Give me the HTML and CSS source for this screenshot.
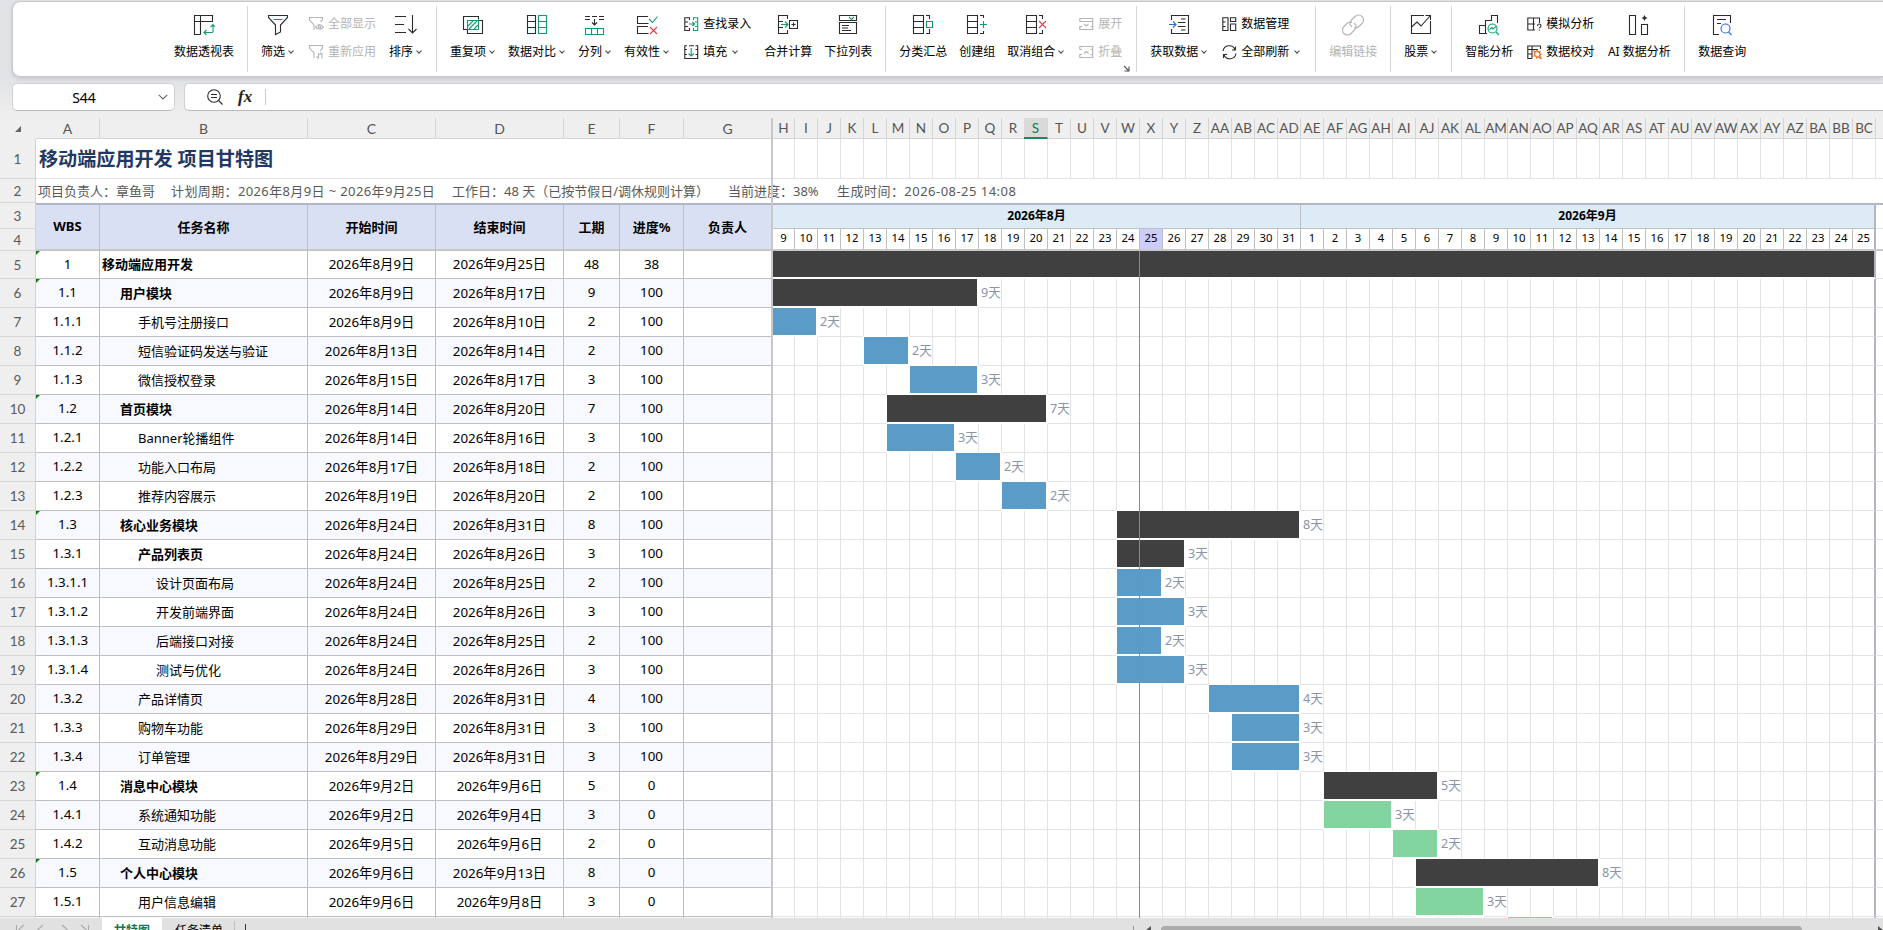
FILE: index.html
```html
<!DOCTYPE html>
<html lang="zh-CN">
<head>
<meta charset="utf-8">
<title>项目甘特图</title>
<link rel="stylesheet" href="styles.css">
</head>
<body>
<div class="app">
  <div class="ribbon">
    <div class="tool"><svg class="ico" viewBox="0 0 22 22"><path d="M7.5 20.500H1.500V1.500H19.500V7.500H1.500M7.500 1.500V20.500"/><path class="g" d="M20 18V10.500M17.500 13L20 10.500L22 13M20 18.500H11M13.500 16L11 18.500L13.500 21"/></svg><span>数据透视表</span></div>
    <i class="sep"></i>
    <div class="tool"><svg class="ico" viewBox="0 0 22 22"><path d="M1.500 1.500H20.500V3.500L13.500 11V18L8.500 20.500V11L1.500 3.500Z"/><path class="g" d="M6.500 5.500H15.500"/></svg><span class="dd">筛选</span></div>
    <div class="stack off">
      <div class="mini"><svg class="sm" viewBox="0 0 15 15"><path d="M5 13L5 8L.5 3V.5H13.500V3L11.500 5M6.500 10Q10.500 5 14.500 10Q10.500 14 6.500 10Z"/><circle cx="10.500" cy="9.800" r="1.200"/></svg><span>全部显示</span></div>
      <div class="mini"><svg class="sm" viewBox="0 0 15 15"><path d="M5 13L5 8L.5 3V.5H13.500V3L11 6M9.500 8V13.500M7.500 11.500L9.500 13.500M13 13.500V8.500Q11 7 11 10"/></svg><span>重新应用</span></div>
    </div>
    <div class="tool"><svg class="ico" viewBox="0 0 22 22"><path d="M0 2.500H11M0 10.500H9M0 18.500H11M17.500 1V19M13.500 15L17.500 19L21.500 15"/></svg><span class="dd">排序</span></div>
    <i class="sep"></i>
    <div class="tool"><svg class="ico" viewBox="0 0 22 22"><path d="M5 15.500H1.500V2.500H16.500V5.500M5.500 16V19.500H20.500V6.500H17"/><path class="g" d="M5.500 6.500H16.500V15.500H5.500ZM6 12L11 7M7 15L15 7M12 15L16 11"/></svg><span class="dd">重复项</span></div>
    <div class="tool"><svg class="ico" viewBox="0 0 22 22"><path d="M1.500 1.500H9.500V19.500H1.500ZM1.500 7.500H9.500M1.500 13.500H9.500"/><path class="g" d="M12.500 1.500H20.500V19.500H12.500ZM12.500 7.500H20.500M12.500 13.500H20.500"/></svg><span class="dd">数据对比</span></div>
    <div class="tool"><svg class="ico" viewBox="0 0 22 22"><path d="M1 2.500H6M8 2.500H13M15 2.500H20M1 5.500H6M15 5.500H20M10.500 5V11M8 8.500L10.500 11L13 8.500"/><path class="g" d="M1.500 14.500H19.500V20.500H1.500ZM7.500 14.500V20.500M13.500 14.500V20.500"/></svg><span class="dd">分列</span></div>
    <div class="tool"><svg class="ico" viewBox="0 0 22 22"><path d="M12 2.500H1.500V9.500H12.500M12 12.500H1.500V19.500H12.500"/><path class="g" d="M13 5L16.500 8.500L21.500 2.500"/><path class="r" d="M14 13L21 20M21 13L14 20"/></svg><span class="dd">有效性</span></div>
    <div class="stack">
      <div class="mini"><svg class="sm" viewBox="0 0 15 15"><path d="M5.500 3V.8H.8V13.500H5.500V11M.8 5H4M.8 9.500H4"/><path class="g" d="M9.500 3V.8H13.700V13.500H9.500V11M13 5H11M13 9.500H11M5 7H10.500M8.500 5L10.500 7L8.500 9"/></svg><span>查找录入</span></div>
      <div class="mini"><svg class="sm" viewBox="0 0 15 15"><path d="M3 .8H.8V13.500H13.700V.8H11.500M5 .8H10M.8 4.500H3M11.500 4.500H13.700M.8 9.500H3M11.500 9.500H13.700"/><path class="g" d="M7.200 3V11M4.500 8.500L7.200 11L10 8.500"/></svg><span class="dd wide">填充</span></div>
    </div>
    <div class="tool"><svg class="ico" viewBox="0 0 22 22"><path d="M10.500 5V1.500H1.500V19.500H10.500V16M1.500 7.500H6M1.500 13.500H6M12.500 6.500H20.500V14.500H12.500ZM14.500 10.500H18.500M16.500 8.500V12.500"/><path class="g" d="M4 10.500H11M8 7.500L11 10.500L8 13.500"/></svg><span>合并计算</span></div>
    <div class="tool"><svg class="ico" viewBox="0 0 22 22"><path d="M2.500 1.500H19.500V6.500H2.500ZM2.500 8.500H19.500V19.500H2.500ZM5 11.500H12M5 14H11M5 16.500H14"/><path class="g" d="M12 3L14.500 5.500L17 3"/></svg><span>下拉列表</span></div>
    <i class="sep"></i>
    <div class="tool"><svg class="ico" viewBox="0 0 22 22"><path d="M1.500 1.500H11.500V19.500H1.500ZM1.500 7.500H11.500M1.500 13.500H11.500M14 1.500H17.500V5M17.500 15V19.500H14"/><path class="g" d="M14.500 7.500H20.500V13.500H14.500Z"/></svg><span>分类汇总</span></div>
    <div class="tool"><svg class="ico" viewBox="0 0 22 22"><path d="M1.500 1.500H11.500V19.500H1.500ZM1.500 7.500H11.500M1.500 13.500H11.500M14 1.500H17.500V4M17.500 17V19.500H14"/><path class="g" d="M14 10.500H21M17.500 7V14"/></svg><span>创建组</span></div>
    <div class="tool"><svg class="ico" viewBox="0 0 22 22"><path d="M1.500 1.500H11.500V19.500H1.500ZM1.500 7.500H11.500M1.500 13.500H11.500M14 1.500H17.500V5M17.500 16V19.500H14"/><path class="r" d="M14 7L21 14M21 7L14 14"/></svg><span class="dd">取消组合</span></div>
    <div class="stack off">
      <div class="mini"><svg class="sm" viewBox="0 0 15 15"><path d="M.8 4.500V1.500H13.700V12.500H.8V9M.8 4.500H13.700M5 7L7.200 9L9.500 7M.8 9.500H3M11.500 9.500H13.700"/></svg><span>展开</span></div>
      <div class="mini"><svg class="sm" viewBox="0 0 15 15"><path d="M.8 4.500V1.500H13.700V12.500H.8V9M3 4.500H.8M5 8.500L7.200 6.500L9.500 8.500M13.700 4.500H11.500M.8 9.500H3M11.500 9.500H13.700"/></svg><span>折叠</span></div>
      <svg class="launch" viewBox="0 0 7 7"><path d="M1 1L5.500 5.500M6 1.500V6H1.500"/></svg>
    </div>
    <i class="sep"></i>
    <div class="tool"><svg class="ico" viewBox="0 0 22 22"><path d="M3.500 6V1.500H20.500V19.500H3.500V15M13 5H17.500M10 8.500H17.500M10 12.500H17.500M13 16H17.500"/><path class="b" d="M1 10.500H8M5 7.500L8 10.500L5 13.500"/></svg><span class="dd">获取数据</span></div>
    <div class="stack">
      <div class="mini"><svg class="sm" viewBox="0 0 15 15"><path d="M.8 .8H6V13.500H.8ZM.8 5H3.500M.8 9.500H3.500M8.500 .8H13.700V4.500H8.500ZM8.500 7H13.700V13.500H8.500Z"/></svg><span>数据管理</span></div>
      <div class="mini"><svg class="sm" viewBox="0 0 15 15"><path d="M1 6A6.300 6.300 0 0 1 13 4.500M13.500 1.500V5H10M14 8.500A6.300 6.300 0 0 1 2 10M1.500 13V9.500H5"/></svg><span class="dd wide">全部刷新</span></div>
    </div>
    <i class="sep"></i>
    <div class="tool off"><svg class="ico" viewBox="0 0 22 22"><path d="M10 13C6.500 10.500 8 7.500 10 5.500L13 2.500C15 .5 18 .5 20 2.500S22 7.500 20 9.500L17 12.500C15.500 14 13.500 14 12 13.500M12 9C15.500 11.500 14 14.500 12 16.500L9 19.500C7 21.500 4 21.500 2 19.500S0 14.500 2 12.500L5 9.500C6.500 8 8.500 8 10 8.500"/></svg><span>编辑链接</span></div>
    <i class="sep"></i>
    <div class="tool"><svg class="ico" viewBox="0 0 22 22"><path d="M14 1.500H1.500V19.500H20.500V7M1.500 13L7 8L11 12L20 2M15.500 1.500H20.500V6"/></svg><span class="dd">股票</span></div>
    <i class="sep"></i>
    <div class="tool"><svg class="ico" viewBox="0 0 22 22"><path d="M9 19.500H1.500V11.500H7.500V19.500M7.500 11.500V6.500H13.500V1.500H19.500V9"/><circle class="g" cx="14.500" cy="14.500" r="4.500"/><path class="g" d="M18 18L21 21M11.500 15.500L14 13.500L15 15L18 12.500"/></svg><span>智能分析</span></div>
    <div class="stack">
      <div class="mini"><svg class="sm" viewBox="0 0 15 15"><path d="M8 13H.8V1H12.500V6M.8 7H8M6.500 1V13M10.500 9Q10.500 7 12 7Q14 7 14 8.700Q14 10 12.300 11M12.300 12.500V13.500"/></svg><span>模拟分析</span></div>
      <div class="mini"><svg class="sm" viewBox="0 0 15 15"><path d="M5 13.500H.8V1H13.500V4M.8 4.500H11M5 1V13.500M.8 9H5"/><path class="o" d="M7 6L9 7L10 5.500L11 7L13 6.500L12.500 8.500L14 9.500L12.500 10.500L14.500 14L11 11.500L9.500 13L9 11L7 11L8 9Z"/></svg><span>数据校对</span></div>
    </div>
    <div class="tool ai"><svg class="ico" viewBox="0 0 22 22"><path d="M1.500 1.500H7.500V20.500H1.500ZM13.500 10.500H19.500V20.500H13.500Z"/><path class="fill" d="M16.500 1L17.500 3L19.500 4L17.500 5L16.500 7L15.500 5L13.500 4L15.500 3Z"/></svg><span>AI 数据分析</span></div>
    <i class="sep"></i>
    <div class="tool"><svg class="ico" viewBox="0 0 22 22"><path d="M8 20.500H2.500V1.500H19.500V9M6 5.500H15M6 9.500H10"/><circle class="b" cx="14.500" cy="14.500" r="4.500"/><path class="b" d="M17.500 18L20.500 21"/></svg><span>数据查询</span></div>
  </div>

  <div class="formula">
    <div class="namebox"><span>S44</span><svg viewBox="0 0 10 6"><path d="M.8 .8L5 5L9.200 .8"/></svg></div>
    <div class="fxbox">
      <svg viewBox="0 0 16 16"><circle cx="7" cy="7" r="6.300"/><path d="M11.500 11.500L15.500 15.500M4 5.500H10M4 8.500H10"/></svg>
      <em>fx</em><i></i>
    </div>
  </div>

  <div class="sheet" id="sheet"></div>

  <div class="bottom">
    <svg class="nav" viewBox="0 0 76 10"><path d="M1.500 0V10M9 0L3.500 5L9 10M28 0L22.500 5L28 10M47 0L52.500 5L47 10M66 0L71.500 5L66 10M73.500 0V10"/></svg>
    <div class="tab on">甘特图</div>
    <div class="tab">任务清单</div>
    <i class="tabsep"></i>
    <span class="plus"></span>
    <div class="scroll"><i class="split"></i><b class="arrow"></b><div class="thumb"></div><b class="arrow right"></b></div>
  </div>
</div>
<script src="script.js"></script>
</body>
</html>
```
FILE: styles.css
```css
*, *::before, *::after { box-sizing: border-box; }
body {
  margin: 0;
  font-family: "Noto Sans", "Noto Sans CJK SC", sans-serif;
  color: #000;
  background: #efefef;
  overflow: hidden;
}
.app {
  width: 1883px;
  height: 930px;
  display: flex;
  flex-direction: column;
  overflow: hidden;
  background: linear-gradient(#e1e3e6 0, #e1e3e6 78px, #efefef 116px);
}
svg { fill: none; stroke: #2b2b2b; stroke-width: 1.1; overflow: visible; }
svg .g { stroke: #0f9d6b; }
svg .r { stroke: #e03e4a; }
svg .b { stroke: #2a6fe0; }
svg .o { stroke: #ee6a1f; }
svg .fill { fill: #2b2b2b; stroke: none; }

/* ribbon */
.ribbon {
  height: 76px;
  margin: 1px 0 0 12px;
  padding: 0 0 0 161px;
  display: flex;
  gap: 12px;
  flex: none;
  background: #fff;
  border: 1px solid #c6c8cb;
  border-right: 0;
  border-radius: 8px 0 0 8px;
  box-shadow: 0 2px 4px rgba(0, 0, 0, .12);
  font-size: 12px;
  line-height: 18px;
  white-space: nowrap;
}
.sep { width: 1px; height: 66px; margin: 4px 1px; background: #d6d6d6; flex: none; }
.tool { display: flex; flex-direction: column; align-items: center; padding-top: 12px; flex: none; }
.tool.ai { width: 64px; }
.ico { width: 22px; height: 22px; margin-bottom: 7px; }
.dd { display: flex; align-items: center; }
.dd::after {
  content: "";
  width: 4px;
  height: 4px;
  margin: -2px 2px 0 4px;
  border: solid #444;
  border-width: 0 1.3px 1.3px 0;
  transform: rotate(45deg);
}
.dd.wide::after { margin-left: 6px; margin-right: 2px; }
.stack { display: flex; flex-direction: column; padding: 13px 1px 0 2px; gap: 10px; flex: none; position: relative; }
.mini { display: flex; align-items: center; gap: 4px; height: 18px; }
.sm { width: 15px; height: 15px; }
.off { color: #b4b4b4; }
.off svg { stroke: #b4b4b4; }
.stack .launch { position: absolute; right: -7px; top: 63px; width: 7px; height: 7px; stroke: #555; }

/* formula bar */
.formula { display: flex; gap: 9px; margin: 6px 0 0 12px; height: 28px; flex: none; }
.namebox, .fxbox { background: #fff; border: 1px solid #cfcfcf; border-bottom-color: #b9b9b9; display: flex; align-items: center; }
.namebox { width: 163px; border-radius: 5px; padding-right: 6px; font-size: 14px; }
.namebox span { flex: 1; text-align: center; padding-right: 3px; }
.namebox svg { width: 10px; height: 6px; stroke: #666; }
.fxbox { flex: 1; border-radius: 5px 0 0 5px; border-right: 0; padding-left: 22px; }
.fxbox svg { width: 16px; height: 16px; }
.fxbox em { font: italic bold 17px/20px "Liberation Serif", serif; margin-left: 15px; width: 16px; color: #222; }
.fxbox i { width: 1px; height: 16px; background: #ccc; margin-left: 11px; }

/* worksheet */
.sheet { height: 800px; margin-top: 7px; flex: none; overflow: hidden; position: relative; background: #fff; }
.row, .header { display: grid; grid-template-columns: 36px 64px 208px 128px 128px 56px 64px 89px 1110px; }
.row { height: 29px; grid-template-rows: 100%; }
.num {
  background: #efefef;
  border-right: 1px solid #d2d2d2;
  border-bottom: 1px solid #d6d6d6;
  font-family: Lato, sans-serif;
  font-size: 13.5px;
  color: #5a5a5a;
  display: flex;
  align-items: center;
  justify-content: center;
}
.cell {
  border-right: 1px solid #bfbfbf;
  border-bottom: 1px solid #bfbfbf;
  font-size: 13.33px;
  display: flex;
  align-items: center;
  justify-content: center;
  white-space: nowrap;
  position: relative;
  padding-bottom: 2px;
}
.row .cell:nth-child(8) { border-right: 2px solid #c8c8c8; }
.row.alt .cell { background: #f8f9fe; }
.cell.name { justify-content: flex-start; padding-left: 2px; font-size: 13px; }
.cell.lv1 { padding-left: 20px; }
.cell.lv2 { padding-left: 38px; }
.cell.lv3 { padding-left: 56px; }
.cell.bold { font-weight: 700; }
.mark::before {
  content: "";
  position: absolute;
  left: 0;
  top: 0;
  border: 2px solid transparent;
  border-color: #107c10 transparent transparent #107c10;
}
.cells { display: grid; grid-template-columns: 22px repeat(47, 23px) 7px; grid-template-rows: 100%; }
.cells i { border-right: 1px solid #e2e3e6; border-bottom: 1px solid #e2e3e6; grid-row: 1; }
.task .cells i:nth-of-type(48) { border-right: 2px solid #b1b5c4; }
.cells i:nth-of-type(49) { border-right: 0; }
.bar {
  grid-row: 1;
  margin: -1px 0 0 -1px;
  border: solid #fff;
  border-width: 1px 2px 2px 1px;
  z-index: 1;
}
.bar.first { margin-left: 0; border-left-width: 0; }
.bar.full { border-right-color: #b1b5c4; }
.bar.dark { background: #404040; }
.bar.blue { background: #5a9bc8; }
.bar.green { background: #82d59e; }
.days {
  grid-row: 1;
  align-self: center;
  padding: 0 0 2px 2px;
  font-size: 12.6px;
  line-height: 20px;
  color: #8a93a8;
  white-space: nowrap;
}

.row.head { height: 21px; }
.head > b, .head .cells b {
  background: #efefef;
  border-right: 1px solid #d4d4d4;
  border-bottom: 1px solid #d4d4d4;
  font: 14px/21px Lato, sans-serif;
  color: #555;
  text-align: center;
  white-space: nowrap;
}
.head .cells b { font-size: 13.5px; overflow: hidden; }
.head > b:nth-child(8) { border-right: 2px solid #c8c8c8; }
.head .cells b.sel { background: #dadada; color: #0f7b50; border-bottom: 2px solid #1b8a5a; margin-left: -1px; }
.head .cells b:last-child { border-right: 0; }
.head .corner { border-color: #efefef; display: flex; align-items: center; padding-left: 15px; }
.head .corner::before { content: ""; border: 3.5px solid transparent; border-color: transparent #666 #666 transparent; margin-top: 2px; }

.row.title { height: 40px; grid-template-columns: 36px 737px 1110px; }
.title h1 {
  margin: 0;
  padding-left: 3px;
  font-size: 19.1px;
  line-height: 40px;
  color: #1f3864;
  border-bottom: 1px solid #e2e3e6;
  border-right: 2px solid #c8c8c8;
}
.row.info { height: 24px; grid-template-columns: 36px 1847px; }
.info p { margin: 0; padding-left: 2px; display: flex; font-size: 13px; line-height: 25px; color: #595959; white-space: nowrap; }
.info p span:nth-child(1) { width: 133px; }
.info p span:nth-child(2) { width: 281px; letter-spacing: .38px; }
.info p span:nth-child(3) { width: 276px; }
.info p span:nth-child(4) { width: 109px; }
.info p span:nth-child(5) { letter-spacing: .47px; }

.header { grid-template-rows: 26px 22px; height: 48px; }
.header .num { grid-column: 1; }
.header .cell { grid-row: 1 / 3; background: #dae0f3; font-weight: 700; font-size: 13px; border-top: 2px solid #b1b5c4; border-bottom: 2px solid #c8c8c8; }
.header .cell.last { border-right: 2px solid #c8c8c8; }
.header .gantt { grid-area: 1 / 9 / 3 / 10; border-top: 2px solid #b1b5c4; border-bottom: 2px solid #c8c8c8; display: grid; grid-template-rows: 24px 20px; }
.months { display: grid; grid-template-columns: 528px 575px 7px; font-size: 12px; font-weight: 700; line-height: 22px; text-align: center; }
.months span { background: #dcebf6; border-right: 1px solid #bfbfbf; border-bottom: 1px solid #bfbfbf; }
.months span:nth-child(2) { border-right: 2px solid #b1b5c4; }
.months i { border-bottom: 1px solid #e2e3e6; }
.dates { display: grid; grid-template-columns: 22px repeat(47, 23px); font-size: 11.3px; line-height: 18px; text-align: center; }
.dates span { border-right: 1px solid #bfbfbf; height: 20px; }
.dates span:last-child { border-right: 2px solid #b1b5c4; }
.dates .today { background: #ccccff; }
.row.first { height: 28px; }
.row.first .bar { margin-top: 0; border-top-width: 0; }
.todayline { position: absolute; left: 1139px; top: 133px; width: 1px; height: 667px; background: #e8655f; z-index: 2; }
.freeze { position: absolute; left: 771px; top: 0; width: 2px; height: 800px; background: #c8c8c8; z-index: 2; }

/* sheet tabs */
.bottom { height: 12px; flex: none; background: #e1e1e1; display: flex; font-size: 12px; line-height: 25px; overflow: hidden; }
.nav { width: 76px; height: 10px; margin: 7px 11px 0 15px; stroke: #aaa; flex: none; }
.tab { padding: 0 13px; height: 24px; white-space: nowrap; }
.tab.on { width: 60px; padding: 0; text-align: center; background: #fff; color: #107c55; font-weight: 700; }
.tabsep { width: 1px; height: 14px; background: #bbb; margin: 3px 10px 0 -2px; }
.plus { width: 1px; height: 12px; background: #333; margin-top: 6px; }
.scroll { margin-left: auto; width: 750px; display: flex; }
.split { width: 1px; height: 12px; margin-top: 8px; background: #999; }
.arrow { margin: 8px 10px 0 12px; border: 4px solid transparent; border-right: 5px solid #555; border-left: 0; height: 8px; }
.thumb { width: 643px; height: 12px; margin-top: 8px; border-radius: 4px; background: #ababab; }
.arrow.right { margin: 8px 0 0 76px; border-left: 5px solid #555; border-right: 0; }
```
FILE: script.js
```js
const tasks = [
  ['1', '移动端应用开发', 0, '8-9', '9-25', 48, 38, 'dark'],
  ['1.1', '用户模块', 1, '8-9', '8-17', 9, 100, 'dark'],
  ['1.1.1', '手机号注册接口', 2, '8-9', '8-10', 2, 100, 'blue'],
  ['1.1.2', '短信验证码发送与验证', 2, '8-13', '8-14', 2, 100, 'blue'],
  ['1.1.3', '微信授权登录', 2, '8-15', '8-17', 3, 100, 'blue'],
  ['1.2', '首页模块', 1, '8-14', '8-20', 7, 100, 'dark'],
  ['1.2.1', 'Banner轮播组件', 2, '8-14', '8-16', 3, 100, 'blue'],
  ['1.2.2', '功能入口布局', 2, '8-17', '8-18', 2, 100, 'blue'],
  ['1.2.3', '推荐内容展示', 2, '8-19', '8-20', 2, 100, 'blue'],
  ['1.3', '核心业务模块', 1, '8-24', '8-31', 8, 100, 'dark'],
  ['1.3.1', '产品列表页', 2, '8-24', '8-26', 3, 100, 'dark'],
  ['1.3.1.1', '设计页面布局', 3, '8-24', '8-25', 2, 100, 'blue'],
  ['1.3.1.2', '开发前端界面', 3, '8-24', '8-26', 3, 100, 'blue'],
  ['1.3.1.3', '后端接口对接', 3, '8-24', '8-25', 2, 100, 'blue'],
  ['1.3.1.4', '测试与优化', 3, '8-24', '8-26', 3, 100, 'blue'],
  ['1.3.2', '产品详情页', 2, '8-28', '8-31', 4, 100, 'blue'],
  ['1.3.3', '购物车功能', 2, '8-29', '8-31', 3, 100, 'blue'],
  ['1.3.4', '订单管理', 2, '8-29', '8-31', 3, 100, 'blue'],
  ['1.4', '消息中心模块', 1, '9-2', '9-6', 5, 0, 'dark'],
  ['1.4.1', '系统通知功能', 2, '9-2', '9-4', 3, 0, 'green'],
  ['1.4.2', '互动消息功能', 2, '9-5', '9-6', 2, 0, 'green'],
  ['1.5', '个人中心模块', 1, '9-6', '9-13', 8, 0, 'dark'],
  ['1.5.1', '用户信息编辑', 2, '9-6', '9-8', 3, 0, 'green'],
  ['', '', 2, '9-10', '9-11', '', '', 'green'],
];

// Column of a "month-day" value on the timeline, 1 being August 9.
const col = d => { const [m, n] = d.split('-').map(Number); return m === 8 ? n - 8 : n + 23; };
const fmt = d => { const [m, n] = d.split('-'); return `2026年${m}月${n}日`; };
const letters = n => (n > 26 ? String.fromCharCode(64 + Math.floor((n - 1) / 26)) : '') + String.fromCharCode(65 + (n - 1) % 26);
const pin = c => ` style="grid-column:${c}"`;
const blanks = Array.from({ length: 49 }, (_, i) => `<i${pin(i + 1)}></i>`).join('');

let html = '<div class="row head"><b class="corner"></b>';
for (let n = 1; n <= 7; n++) html += `<b>${letters(n)}</b>`;
html += '<div class="cells">';
for (let n = 8; n <= 55; n++) html += `<b${n === 19 ? ' class="sel"' : ''}>${letters(n)}</b>`;
html += '<b></b></div></div>';

html += `<div class="row title"><div class="num">1</div><h1>移动端应用开发 项目甘特图</h1><div class="cells">${blanks}</div></div>`;
html += `<div class="row info"><div class="num">2</div><p><span>项目负责人：章鱼哥</span><span>计划周期：2026年8月9日 ~ 2026年9月25日</span><span>工作日：48 天（已按节假日/调休规则计算）</span><span>当前进度：38%</span><span>生成时间：2026-08-25 14:08</span></p></div>`;

html += '<div class="header"><div class="num">3</div><div class="num">4</div>';
['WBS', '任务名称', '开始时间', '结束时间', '工期', '进度%', '负责人'].forEach((t, i) => {
  html += `<div class="cell${i === 6 ? ' last' : ''}"${pin(i + 2)}>${t}</div>`;
});
html += '<div class="gantt"><div class="months"><span>2026年8月</span><span>2026年9月</span><i></i></div><div class="dates">';
for (let i = 0; i < 48; i++) {
  const day = i < 23 ? i + 9 : i - 22;
  html += `<span${i === 16 ? ' class="today"' : ''}>${day}</span>`;
}
html += '</div></div></div>';

tasks.forEach(([wbs, name, lv, from, to, days, pct, color], i) => {
  const a = col(from), b = col(to) + 1;
  const bold = color === 'dark' ? ' bold' : '';
  const mark = wbs && lv < 2 ? ' mark' : '';
  html += `<div class="row task${i === 0 ? ' first' : ''}${i % 2 ? ' alt' : ''}"><div class="num">${wbs && i + 5}</div>`
    + `<div class="cell${mark}">${wbs}</div><div class="cell name lv${lv}${bold}">${name}</div>`
    + `<div class="cell">${wbs && fmt(from)}</div><div class="cell">${wbs && fmt(to)}</div>`
    + `<div class="cell">${days}</div><div class="cell">${pct}</div><div class="cell"></div>`
    + `<div class="cells">${blanks}<div class="bar ${color}${a === 1 ? ' first' : ''}${b === 49 ? ' full' : ''}"${pin(a + '/' + b)}></div>`
    + (b < 49 && days ? `<span class="days"${pin(b)}>${days}天</span>` : '') + '</div></div>';
});
html += '<div class="freeze"></div><div class="todayline"></div>';
document.getElementById('sheet').innerHTML = html;
```
